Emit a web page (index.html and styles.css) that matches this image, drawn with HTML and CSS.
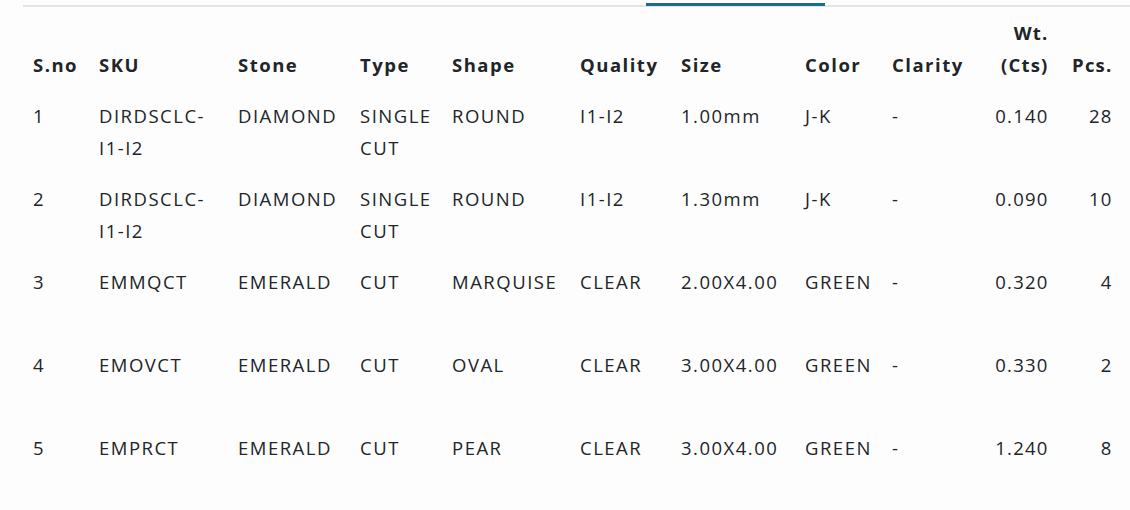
FILE: index.html
```html
<!DOCTYPE html>
<html>
<head>
<meta charset="utf-8">
<link rel="stylesheet" href="styles.css">
</head>
<body>
<div class="tabbar"><span class="tab-indicator"></span></div>
<table class="items">
  <colgroup>
    <col class="c-sno"><col class="c-sku"><col class="c-stone"><col class="c-type"><col class="c-shape"><col class="c-quality"><col class="c-size"><col class="c-color"><col class="c-clarity"><col class="c-wt"><col class="c-pcs">
  </colgroup>
  <thead>
    <tr>
      <th>S.no</th><th>SKU</th><th>Stone</th><th>Type</th><th>Shape</th><th>Quality</th><th>Size</th><th>Color</th><th>Clarity</th><th class="num">Wt.<br>(Cts)</th><th class="num">Pcs.</th>
    </tr>
  </thead>
  <tbody>
    <tr><td>1</td><td>DIRDSCLC-<br>I1-I2</td><td>DIAMOND</td><td>SINGLE<br>CUT</td><td>ROUND</td><td>I1-I2</td><td>1.00mm</td><td>J-K</td><td>-</td><td class="num">0.140</td><td class="num">28</td></tr>
    <tr><td>2</td><td>DIRDSCLC-<br>I1-I2</td><td>DIAMOND</td><td>SINGLE<br>CUT</td><td>ROUND</td><td>I1-I2</td><td>1.30mm</td><td>J-K</td><td>-</td><td class="num">0.090</td><td class="num">10</td></tr>
    <tr><td>3</td><td>EMMQCT</td><td>EMERALD</td><td>CUT</td><td>MARQUISE</td><td>CLEAR</td><td>2.00X4.00</td><td>GREEN</td><td>-</td><td class="num">0.320</td><td class="num">4</td></tr>
    <tr><td>4</td><td>EMOVCT</td><td>EMERALD</td><td>CUT</td><td>OVAL</td><td>CLEAR</td><td>3.00X4.00</td><td>GREEN</td><td>-</td><td class="num">0.330</td><td class="num">2</td></tr>
    <tr><td>5</td><td>EMPRCT</td><td>EMERALD</td><td>CUT</td><td>PEAR</td><td>CLEAR</td><td>3.00X4.00</td><td>GREEN</td><td>-</td><td class="num">1.240</td><td class="num">8</td></tr>
  </tbody>
</table>
</body>
</html>
```

FILE: styles.css
```css
html, body {
  margin: 0;
  padding: 0;
  background: #fdfdfd;
}
body {
  width: 1130px;
  height: 510px;
  overflow: hidden;
  font-family: "Open Sans", "DejaVu Sans", sans-serif;
  color: #212529;
}
.tabbar {
  position: relative;
  margin: 5px 0 0 23px;
  height: 0;
  border-bottom: 2px solid #e1e5ea;
}
.tab-indicator {
  position: absolute;
  left: 623px;
  top: -2px;
  width: 179px;
  height: 3px;
  background: #1b6a91;
}
.items {
  margin: 2px 0 0 25px;
  width: 1094px;
  table-layout: fixed;
  border-collapse: collapse;
  font-size: 18.5px;
  line-height: 32px;
  letter-spacing: 1.5px;
}
.c-sno { width: 66px; }
.c-sku { width: 139px; }
.c-stone { width: 122px; }
.c-type { width: 92px; }
.c-shape { width: 128px; }
.c-quality { width: 101px; }
.c-size { width: 124px; }
.c-color { width: 87px; }
.c-clarity { width: 96px; }
.c-wt { width: 75px; }
.c-pcs { width: 64px; }
.items th, .items td {
  padding: 0 8px;
  text-align: left;
  white-space: nowrap;
}
.items th {
  vertical-align: bottom;
  font-weight: 700;
  height: 64px;
  padding-top: 8px;
  padding-bottom: 8px;
}
.items td {
  vertical-align: top;
  height: 64px;
  padding-top: 11px;
  padding-bottom: 8px;
}
.items .num {
  text-align: right;
  letter-spacing: 1.2px;
}
.items .num {
  padding-right: 6.5px;
}
```
